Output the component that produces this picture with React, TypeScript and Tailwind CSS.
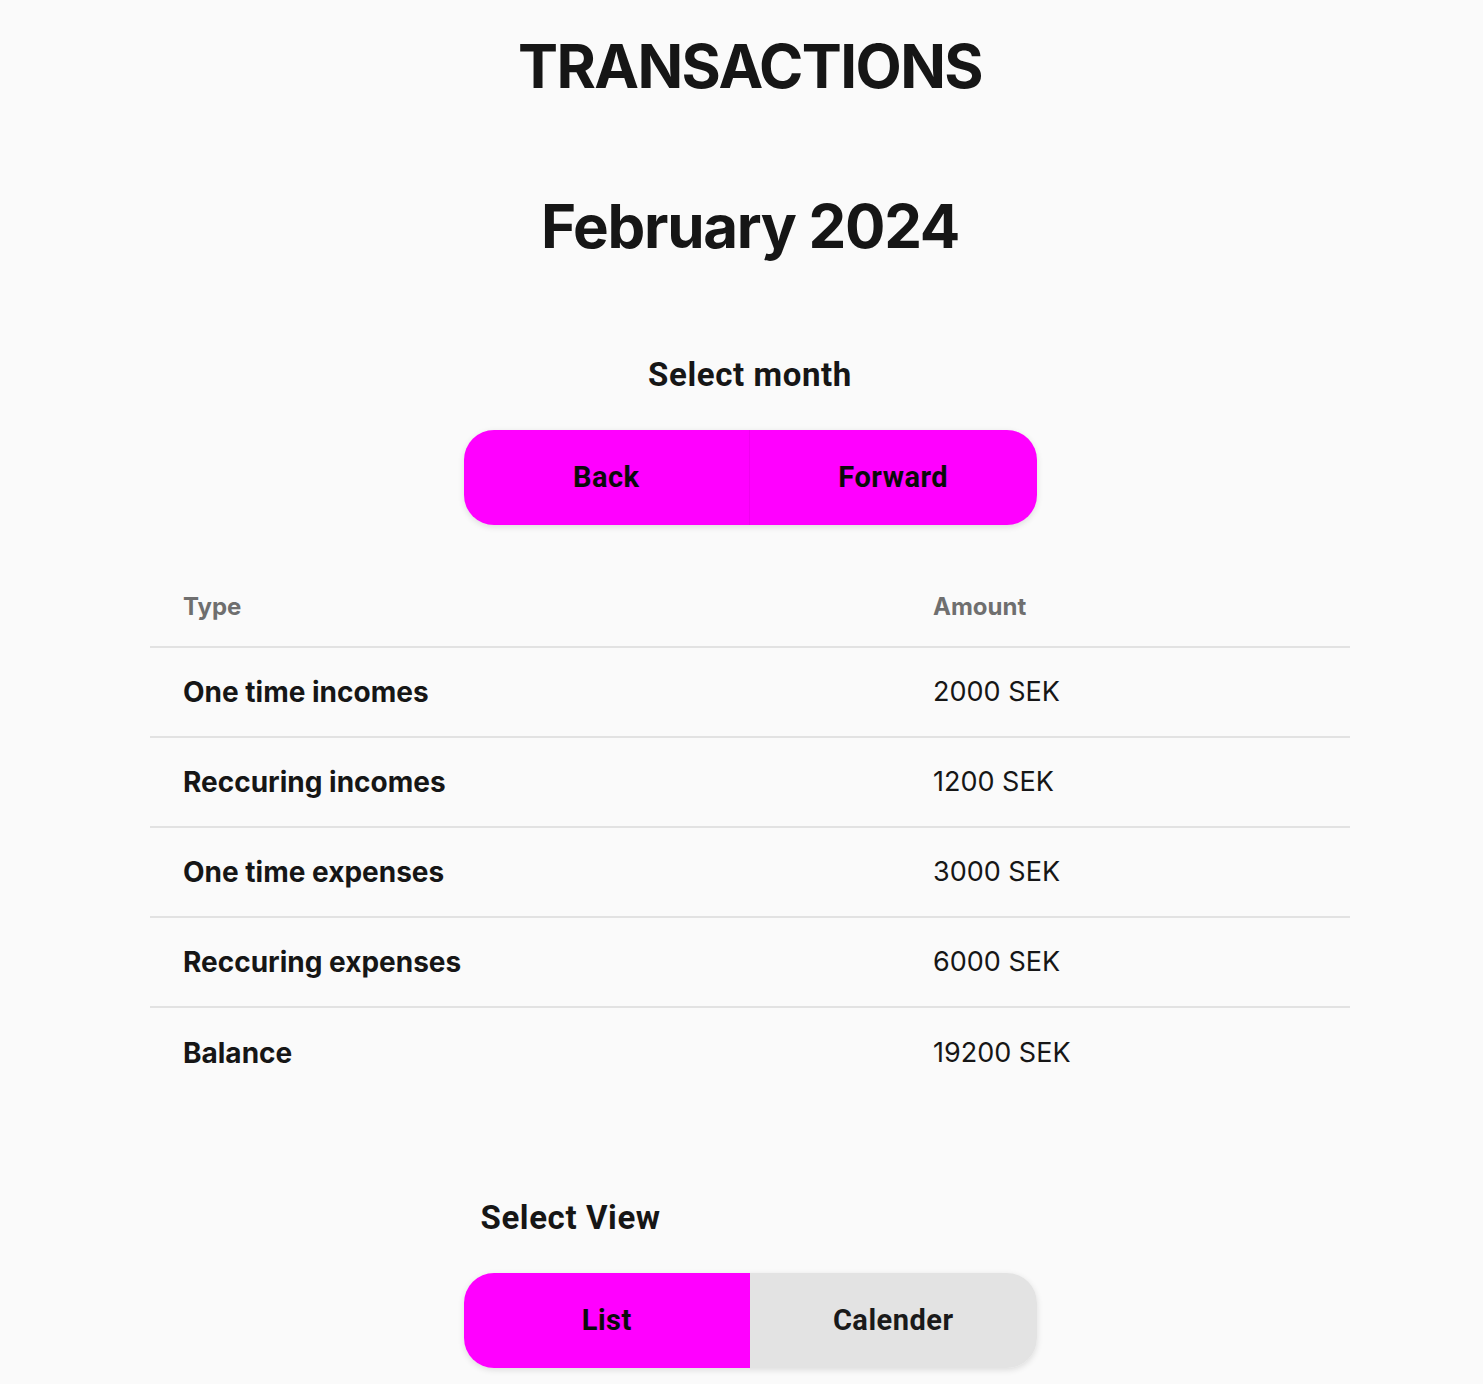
import React from "react";

const rows = [
  { type: "One time incomes", amount: "2000 SEK" },
  { type: "Reccuring incomes", amount: "1200 SEK" },
  { type: "One time expenses", amount: "3000 SEK" },
  { type: "Reccuring expenses", amount: "6000 SEK" },
  { type: "Balance", amount: "19200 SEK" },
];

export default function App() {
  return (
    <div className="min-h-[1384px] w-full bg-[#fafafa] text-[#161616] flex flex-col items-center pl-[17px]">
      <h1 className="mt-[36px] text-[60px] leading-none font-bold font-['Inter',sans-serif] tracking-[-1.6px]">
        TRANSACTIONS
      </h1>
      <h2 className="mt-[100px] text-[60px] leading-none font-bold font-['Inter',sans-serif] tracking-[-1.3px]">
        February 2024
      </h2>
      <div className="mt-[102px] text-[33px] leading-none font-bold font-['Roboto',sans-serif] tracking-[0.6px]">
        Select month
      </div>
      <div className="mt-[39px] w-[573px] h-[95px] rounded-[30px] bg-[#ff00ff] shadow-[0_2px_6px_rgba(0,0,0,0.12)] grid grid-cols-2 overflow-hidden font-['Roboto',sans-serif] text-[29px] tracking-[0.5px] font-bold text-[#0a0a0a]">
        <div className="flex items-center justify-center border-r border-[#f000f0]">Back</div>
        <div className="flex items-center justify-center">Forward</div>
      </div>

      <div className="mt-[42px] w-[1200px] font-['Inter',sans-serif]">
        <div className="grid grid-cols-[750px_450px] h-[81px] border-b-2 border-[#e2e2e2] text-[24px] font-bold text-[#6f6f6f]">
          <div className="pl-[33px] flex items-center">Type</div>
          <div className="pl-[33px] flex items-center">Amount</div>
        </div>
        {rows.map((r, i) => (
          <div
            key={r.type}
            className={
              i < rows.length - 1
                ? "grid grid-cols-[750px_450px] h-[90px] border-b-2 border-[#e2e2e2]"
                : "grid grid-cols-[750px_450px] h-[90px]"
            }
          >
            <div className="pl-[33px] flex items-center font-bold text-[28px]">{r.type}</div>
            <div className="pl-[33px] flex items-center font-normal text-[27px]">{r.amount}</div>
          </div>
        ))}
      </div>

      <div className="mt-[103px] w-[573px] pl-[17px] text-[33px] leading-none font-bold font-['Roboto',sans-serif] tracking-[0.6px]">
        Select View
      </div>
      <div className="mt-[39px] w-[573px] h-[95px] rounded-[30px] shadow-[0_2px_6px_rgba(0,0,0,0.12)] grid grid-cols-2 overflow-hidden font-['Roboto',sans-serif] text-[29px] tracking-[0.5px] font-bold">
        <div className="flex items-center justify-center bg-[#ff00ff] text-[#0a0a0a]">List</div>
        <div className="flex items-center justify-center bg-[#e3e3e3] text-[#1a1a1a]">Calender</div>
      </div>
    </div>
  );
}
